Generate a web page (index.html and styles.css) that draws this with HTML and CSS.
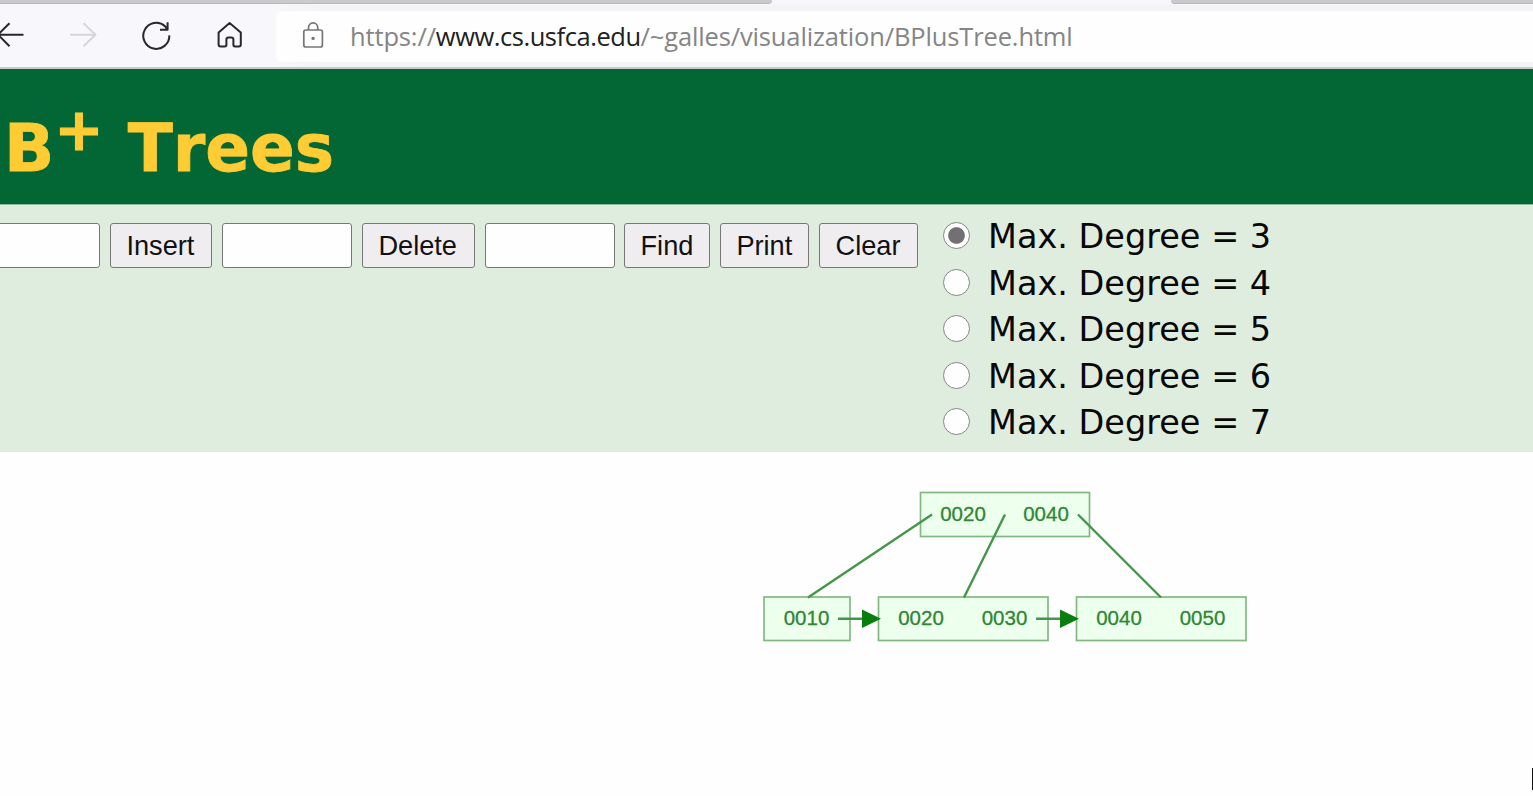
FILE: index.html
```
<!DOCTYPE html>
<html lang="en">
<head>
<meta charset="utf-8">
<title>B+ Tree Visualization</title>
<link rel="stylesheet" href="styles.css">
</head>
<body>
<div class="tabs"><div class="tab tab-left"></div><div class="tab tab-right"></div></div>
<nav class="toolbar">
  <svg class="nav-icons" width="276" height="62" viewBox="0 6 276 62">
    <path class="icon" d="M23.5 34.7H-2M9.5 23.2L-2 34.7L9.5 46.2"/>
    <path class="icon disabled" d="M70 34.7H96M83.5 23.2L95.5 34.7L83.5 46.2"/>
    <path class="icon" d="M169.3 35.4A13 13 0 1 1 165 26.2L167.6 29.8M167.6 22.3V29.8H160"/>
    <path class="icon" d="M218.6 32.4L229.6 23L240.8 32.4V44.5Q240.8 46.5 238.8 46.5H235Q233.4 46.5 233.4 44.8V39.5Q233.4 37.4 231.3 37.4H228.5Q226.4 37.4 226.4 39.5V44.8Q226.4 46.5 224.6 46.5H220.6Q218.6 46.5 218.6 44.5Z"/>
  </svg>
  <div class="address">
    <svg class="lock" width="22" height="27" viewBox="0 0 22 27">
      <rect x="1.8" y="8" width="18.6" height="17" rx="2"/>
      <path d="M6.5 8V5.5A4.6 4.6 0 0 1 15.7 5.5V8"/>
      <circle cx="11.1" cy="16.4" r="1.7"/>
    </svg>
    <div class="url">https://<span class="domain">www.cs.usfca.edu</span>/~galles/visualization/BPlusTree.html</div>
  </div>
</nav>
<header class="banner"><h1>B<sup>+</sup> Trees</h1></header>
<section class="controls">
  <div class="actions">
    <input class="field field-first" type="text" aria-label="Insert value">
    <button class="button insert">Insert</button>
    <input class="field" type="text" aria-label="Delete value">
    <button class="button delete">Delete</button>
    <input class="field" type="text" aria-label="Find value">
    <button class="button find">Find</button>
    <button class="button print">Print</button>
    <button class="button clear">Clear</button>
  </div>
  <div class="degrees">
    <label class="degree"><input type="radio" name="degree" checked><span>Max. Degree = 3</span></label>
    <label class="degree"><input type="radio" name="degree"><span>Max. Degree = 4</span></label>
    <label class="degree"><input type="radio" name="degree"><span>Max. Degree = 5</span></label>
    <label class="degree"><input type="radio" name="degree"><span>Max. Degree = 6</span></label>
    <label class="degree"><input type="radio" name="degree"><span>Max. Degree = 7</span></label>
  </div>
</section>
<main class="canvas">
  <svg class="tree" width="1533" height="344" viewBox="0 452 1533 344">
    <g class="node">
      <rect x="920.5" y="492.5" width="169" height="44"/>
      <rect x="764" y="597" width="86" height="43.5"/>
      <rect x="878.5" y="597" width="169.5" height="43.5"/>
      <rect x="1076.5" y="597" width="169.5" height="43.5"/>
    </g>
    <g class="edge">
      <path d="M932 514.5L808 597.5M1005 514.5L964 597.5M1078 514.5L1161 597.5M838 618.7H864M1036 618.7H1062"/>
    </g>
    <path class="arrow" d="M862 609.5L881 618.7L862 628ZM1060 609.5L1079 618.7L1060 628Z"/>
    <g class="key">
      <text x="963" y="521">0020</text>
      <text x="1046" y="521">0040</text>
      <text x="806.5" y="625">0010</text>
      <text x="921" y="625">0020</text>
      <text x="1004.5" y="625">0030</text>
      <text x="1119" y="625">0040</text>
      <text x="1202.5" y="625">0050</text>
    </g>
    <path class="caret" d="M1532.5 768V790"/>
  </svg>
</main>
</body>
</html>
```
FILE: styles.css
```
* { box-sizing: border-box; }
body { margin: 0; width: 1533px; height: 796px; overflow: hidden; background: #fefefe; }
.tabs { display: flex; justify-content: space-between; height: 5px; background: #f8f6fa; }
.tab { height: 4px; background: #cbc9cc; border-bottom: 1px solid #b9b7ba; }
.tab-left { width: 772px; border-bottom-right-radius: 5px; }
.tab-right { width: 362px; border-bottom-left-radius: 5px; }
.toolbar { display: flex; height: 64px; padding-top: 1px; background: linear-gradient(90deg, #f8f7fb 270px, #f4f3f5 320px); border-bottom: 2px solid #c5cbc5; }
.nav-icons { flex: none; }
.icon { fill: none; stroke: #29272b; stroke-width: 2; stroke-linejoin: round; }
.disabled { stroke: #d7d5d9; }
.address { display: flex; flex: 1; height: 51px; margin-top: 5px; padding-left: 26px; background: #fefefe; border-radius: 6px 0 0 6px; }
.lock { flex: none; margin-top: 11px; fill: none; stroke: #77757a; stroke-width: 1.7; }
.lock circle { fill: #77757a; stroke: none; }
.url { margin-left: 26px; font: 25.5px/51px "Open Sans", sans-serif; color: #858585; white-space: nowrap; letter-spacing: -0.14px; }
.domain { color: #202020; letter-spacing: -0.46px; }
.banner { height: 135px; padding-left: 4px; background: #036735; }
h1 { margin: 0; font: bold 66px/160px "DejaVu Sans", sans-serif; color: #ffcc33; white-space: nowrap; font-kerning: none; -webkit-text-stroke: 0.8px #ffcc33; }
sup { margin-right: 1px; font-size: 59px; line-height: 0; vertical-align: 21px; font-weight: bold; -webkit-text-stroke: 1.2px #ffcc33; }
.controls { display: flex; height: 248px; background: #dfeddf; border-top: 1px solid #8dbb9e; }
.actions { display: flex; gap: 9.9px; width: 940px; padding-top: 18px; }
.field, .button { height: 45px; border: 1.5px solid #777; border-radius: 3px; padding: 0; margin: 0; flex: none; }
.field { width: 130px; background: #fefefe; }
.field-first { margin-left: -30px; }
.button { padding-right: 1px; font: 27.2px "Liberation Sans", Arial, sans-serif; color: #111; background: #f0edf1; }
.insert { width: 102px; }
.delete { width: 113px; }
.find { width: 86px; }
.print { width: 89px; }
.clear { width: 98.5px; }
.degrees { padding: 8px 0 0 3px; }
.degree { display: flex; height: 46.6px; font: 33.5px/48.8px "DejaVu Sans", sans-serif; color: #080808; white-space: nowrap; }
.degree input { appearance: none; width: 27px; height: 27px; margin: 9px 18px 0 0; border: 1.5px solid #858585; border-radius: 50%; background: #fefefe; }
.degree input:checked { background: radial-gradient(circle, #737073 7.8px, #fefefe 8.8px); }
.canvas { height: 344px; }
.tree { display: block; }
.node rect { fill: #edffed; stroke: #82b982; stroke-width: 1.7; }
.edge { fill: none; stroke: #43964a; stroke-width: 2.4; }
.arrow { fill: #087e0c; }
.key { font: 20.5px "Liberation Sans", Arial, sans-serif; fill: #2e8734; stroke: #2e8734; stroke-width: 0.3; text-anchor: middle; }
.caret { stroke: #111; stroke-width: 1; }
```
